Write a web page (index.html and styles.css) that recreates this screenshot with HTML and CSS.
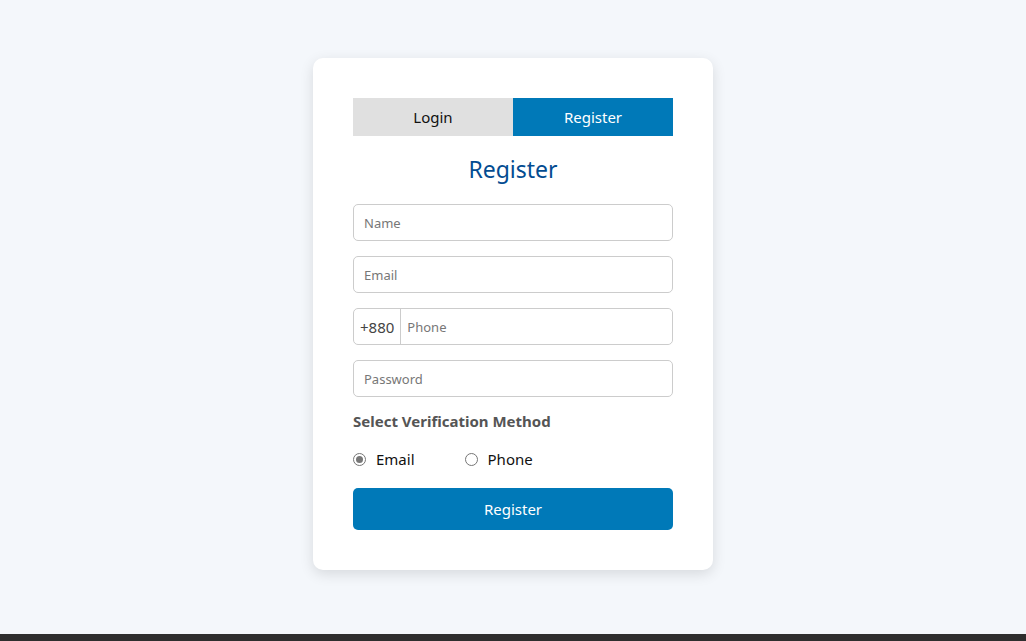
FILE: index.html
```html
<!DOCTYPE html>
<html lang="en">
<head>
    <meta charset="UTF-8">
    <meta name="viewport" content="width=device-width, initial-scale=1.0">
    <title>Register</title>
    <link rel="stylesheet" href="styles.css">
</head>
<body>

<div class="page">
    <div class="container">
        <div class="tabs">
            <button type="button" class="tab">Login</button>
            <button type="button" class="tab active">Register</button>
        </div>
        <h2>Register</h2>
        <form id="registerForm" action="/register" method="POST">
            <input type="text" name="name" placeholder="Name" required>
            <input type="email" name="email" placeholder="Email" required>
            <div class="phone-group">
                <span class="prefix">+880</span>
                <input type="tel" name="phone" placeholder="Phone">
            </div>
            <input type="password" name="password" placeholder="Password" required>

            <label class="method-label">Select Verification Method</label>
            <div class="radio-row">
                <label class="radio"><input type="radio" name="method" value="email" checked> Email</label>
                <label class="radio"><input type="radio" name="method" value="phone"> Phone</label>
            </div>

            <button type="submit" class="submit-btn">Register</button>
        </form>
    </div>
</div>

<footer class="footer"></footer>

</body>
</html>
```

FILE: styles.css
```css
body {
    font-family: "Noto Sans", Arial, sans-serif;
    background-color: #f4f7fb;
    color: #333;
    margin: 0;
    padding: 0;
}

.page {
    height: 634px;
    padding-top: 58px;
    box-sizing: border-box;
}

.container {
    width: 400px;
    margin: 0 auto;
    padding: 40px;
    box-sizing: border-box;
    background-color: #fff;
    border-radius: 10px;
    box-shadow: 0 4px 14px rgba(0, 0, 0, 0.12);
}

.tabs {
    display: flex;
}

.tab {
    flex: 1;
    height: 38px;
    border: none;
    background-color: #e0e0e0;
    color: #111;
    font-family: inherit;
    font-size: 15px;
    cursor: pointer;
}

.tab.active {
    background-color: #0079b8;
    color: #fff;
}

h2 {
    text-align: center;
    color: #034c91;
    font-weight: normal;
    font-size: 23px;
    margin: 17px 0 19px;
    line-height: 32px;
}

form {
    display: flex;
    flex-direction: column;
    gap: 15px;
}

input[type="text"],
input[type="email"],
input[type="tel"],
input[type="password"] {
    height: 37px;
    box-sizing: border-box;
    padding: 0 10px;
    border: 1px solid #ccc;
    border-radius: 5px;
    font-family: inherit;
    font-size: 13px;
    color: #333;
}

::placeholder {
    color: #777;
}

.phone-group {
    display: flex;
    height: 37px;
    border: 1px solid #ccc;
    border-radius: 5px;
    box-sizing: border-box;
}

.prefix {
    display: flex;
    align-items: center;
    padding: 0 6px;
    border-right: 1px solid #ccc;
    font-size: 15px;
    color: #444;
}

.phone-group input[type="tel"] {
    flex: 1;
    height: 35px;
    border: none;
    border-radius: 0 5px 5px 0;
    padding: 0 6px;
}

.method-label {
    font-weight: bold;
    font-size: 15px;
    line-height: 19px;
    color: #555;
}

.radio-row {
    display: flex;
    gap: 50px;
    margin-top: 3px;
}

.radio {
    display: flex;
    align-items: center;
    gap: 10px;
    font-size: 15px;
    color: #111;
}

.radio input {
    appearance: none;
    width: 13px;
    height: 13px;
    margin: 0;
    border: 1px solid #767676;
    border-radius: 50%;
    display: grid;
    place-items: center;
}

.radio input:checked::before {
    content: "";
    width: 7px;
    height: 7px;
    border-radius: 50%;
    background-color: #777;
}

.submit-btn {
    height: 42px;
    margin-top: 4px;
    background-color: #0079b8;
    color: #fff;
    border: none;
    border-radius: 5px;
    font-family: inherit;
    font-size: 15px;
    cursor: pointer;
}

.submit-btn:hover {
    background-color: #006aa3;
}

.footer {
    height: 7px;
    background-color: #2e2e2e;
}
```
